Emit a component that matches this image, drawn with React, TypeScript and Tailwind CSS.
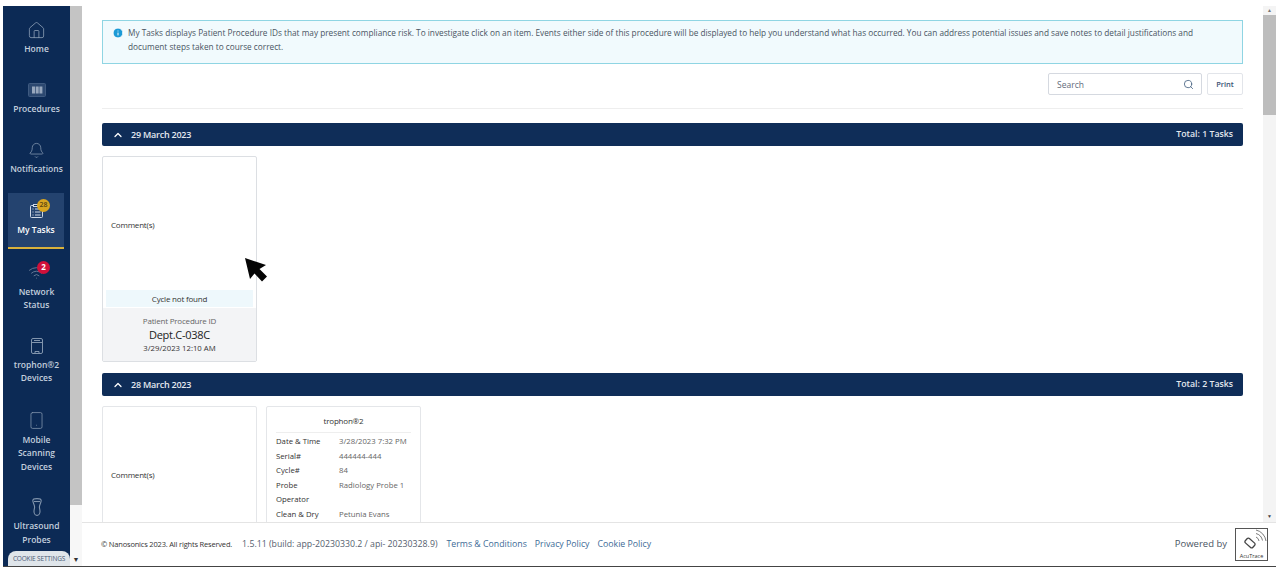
import { Bell, ChevronUp, Home, Info, Search, Smartphone, Wifi } from "lucide-react";
import type { ReactNode } from "react";

function ProceduresIcon() {
  return (
    <svg width="18" height="14" viewBox="0 0 18 14">
      <rect x="0.5" y="0.5" width="17" height="13" rx="1" fill="#2c4870" stroke="#3f5a80" />
      <rect x="4" y="3.5" width="3" height="7" fill="#97a7bd" />
      <rect x="7.7" y="3.5" width="3" height="7" fill="#97a7bd" />
      <rect x="11.4" y="3.5" width="3" height="7" fill="#97a7bd" />
    </svg>
  );
}

function TasksIcon() {
  return (
    <svg width="13" height="14" viewBox="0 0 13 14" fill="none" stroke="#cfd9e6" strokeWidth="1">
      <rect x="0.5" y="1.5" width="12" height="12" rx="1" />
      <rect x="3.5" y="0.5" width="6" height="2" fill="#0c2a55" />
      <path d="M2.500 5h1M5 5h5.500M2.500 8h1M5 8h5.500M2.500 11h1M5 11h5.500" />
    </svg>
  );
}

function TrophonIcon() {
  return (
    <svg width="12" height="16" viewBox="0 0 12 16" fill="none" stroke="#8295ad" strokeWidth="1">
      <rect x="0.5" y="0.5" width="11" height="15" rx="1.500" />
      <path d="M0.500 4.500h11M3 2.500h6M4 15.500v-2h4v2" />
    </svg>
  );
}

function ProbeIcon() {
  return (
    <svg width="10" height="18" viewBox="0 0 10 18" fill="none" stroke="#8295ad" strokeWidth="1.100">
      <path d="M0.800 2.500C0.800 1.200 2.500 .6 5 .6s4.200 .6 4.200 1.900c0 2.500-1.800 4-1.800 6.500 0 1.500.6 2.600.6 4.500 0 2-1.300 3.900-3 3.900s-3-1.900-3-3.900c0-1.900.6-3 .6-4.500 0-2.500-1.800-4-1.800-6.500z" />
      <path d="M2 3.500h6" />
    </svg>
  );
}

type NavItem = { labels: string[]; icon: ReactNode; space: string; badge?: string };

const navItems: NavItem[] = [
  { labels: ["Home"], icon: <Home size={19} strokeWidth={1} color="#8fa1b8" />, space: "mt-[13px]" },
  { labels: ["Procedures"], icon: <ProceduresIcon />, space: "mt-[23px]" },
  { labels: ["Notifications"], icon: <Bell size={17} strokeWidth={1} color="#8fa1b8" />, space: "mt-[24px]" },
];

const navItemsBelow: NavItem[] = [
  { labels: ["Network", "Status"], icon: <Wifi size={17} strokeWidth={1.2} color="#71849e" />, space: "mt-[13px]", badge: "2" },
  { labels: ["trophon®2", "Devices"], icon: <TrophonIcon />, space: "mt-[23px]" },
  { labels: ["Mobile", "Scanning", "Devices"], icon: <Smartphone size={19} strokeWidth={1} color="#8295ad" />, space: "mt-[25px]" },
  { labels: ["Ultrasound", "Probes"], icon: <ProbeIcon />, space: "mt-[23px]" },
];

function NavEntry({ item }: { item: NavItem }) {
  return (
    <div className={`${item.space} flex flex-col items-center`}>
      <div className="relative flex h-[22px] w-full items-center justify-center">
        {item.icon}
        {item.badge && (
          <span className="absolute left-[34px] top-[-1px] flex h-[13px] w-[13px] items-center justify-center rounded-full bg-[#d0103a] text-[8px] font-bold text-white">
            {item.badge}
          </span>
        )}
      </div>
      <div className="mt-[1px] text-center text-[8.500px] font-semibold leading-[13.500px] text-[#c3cfdd]">
        {item.labels.map((label) => (
          <div key={label}>{label}</div>
        ))}
      </div>
    </div>
  );
}

function Sidebar() {
  return (
    <aside className="relative h-full w-[67px] shrink-0 overflow-hidden bg-[#0c2a55]">
      {navItems.map((item) => (
        <NavEntry key={item.labels[0]} item={item} />
      ))}
      <div className="ml-[5px] mr-[6px] mt-[17px] flex h-[56px] flex-col items-center border-b-2 border-[#d9b13b] bg-[#24436f] pt-[7px]">
        <div className="relative flex h-[22px] w-full items-center justify-center">
          <TasksIcon />
          <span className="absolute left-[29px] top-[-1px] flex h-[13px] w-[13px] items-center justify-center rounded-full bg-[#d9a520] text-[7px] font-semibold text-[#5b4510]">
            28
          </span>
        </div>
        <div className="mt-[1px] text-[8.500px] font-semibold leading-[13.500px] text-white">My Tasks</div>
      </div>
      {navItemsBelow.map((item) => (
        <NavEntry key={item.labels[0]} item={item} />
      ))}
      <div className="absolute bottom-0 left-[5px] flex h-[15px] w-[62px] items-center justify-center rounded-tl-[8px] rounded-tr-[8px] bg-[#dfe5ea] text-[6.500px] tracking-tight text-[#4a5a75]">
        COOKIE SETTINGS
      </div>
    </aside>
  );
}

function Comments() {
  return <div className="flex h-[134px] items-center pl-[8px] pt-[2px] text-[8px] tracking-tight text-[#333]">Comment(s)</div>;
}

function DateBar({ date, total }: { date: string; total: string }) {
  return (
    <div className="flex h-[23px] items-center justify-between rounded-[2px] bg-[#0f2d58] pl-[10px] pr-[10px] text-[8.750px] font-semibold text-[#e3e8ef]">
      <div className="flex items-center gap-[7px]">
        <ChevronUp size={12} strokeWidth={2.5} color="white" />
        <span className="text-[9px] tracking-tight">{date}</span>
      </div>
      <span>{total}</span>
    </div>
  );
}

const cycleRows = [
  ["Date & Time", "3/28/2023 7:32 PM"],
  ["Serial#", "444444-444"],
  ["Cycle#", "84"],
  ["Probe", "Radiology Probe 1"],
  ["Operator", ""],
  ["Clean & Dry", "Petunia Evans"],
];

function TaskContent() {
  return (
    <div className="flex-1 overflow-hidden pl-[20px] pr-[20px] pt-[14px]">
      <div className="flex h-[44px] gap-[4px] border border-[#8fd5e3] bg-[#f1fafd] pl-[9px] pr-[30px] pt-[5px] text-[8.250px] leading-[14px] text-[#4a5563]">
        <Info size={12} fill="#1b9ad6" color="white" strokeWidth={2} className="mt-[1px] shrink-0" />
        <p>
          My Tasks displays Patient Procedure IDs that may present compliance risk. To investigate click on an item. Events either side of this procedure will be displayed to help you understand what has occurred. You can address potential issues and save notes to detail justifications and document steps taken to course correct.
        </p>
      </div>
      <div className="mt-[9px] flex justify-end gap-[5px]">
        <div className="flex h-[22px] w-[154px] items-center justify-between rounded-[2px] border border-[#d5d9e0] pl-[8px] pr-[7px] text-[8.500px] text-[#5f6b7a]">
          <span className="pt-[2px]">Search</span>
          <Search size={11} strokeWidth={1.8} color="#44607f" />
        </div>
        <div className="flex h-[22px] w-[36px] items-center justify-center rounded-[2px] border border-[#e2e5ea] pt-[1px] text-[7.500px] font-semibold text-[#3c5475]">
          Print
        </div>
      </div>
      <div className="mb-[14px] mt-[13px] h-px bg-[#eeeeee]" />
      <DateBar date="29 March 2023" total="Total: 1 Tasks" />
      <div className="mt-[10px] h-[206px] w-[155px] overflow-hidden rounded-[2px] border border-[#dcdfe3] bg-white">
        <Comments />
        <div className="mx-[3px] -mt-px flex h-[17px] items-center justify-center bg-[#eef8fc] text-[8px] tracking-tight text-[#333]">
          Cycle not found
        </div>
        <div className="mt-px flex h-[54px] flex-col items-center bg-[#f3f4f6] pt-[7px] text-[#333]">
          <div className="text-[8px] leading-[11px] tracking-tight text-[#666]">Patient Procedure ID</div>
          <div className="text-[11px] font-medium leading-[17px] tracking-tight text-[#222]">Dept.C-038C</div>
          <div className="text-[7.750px] leading-[11px]">3/29/2023 12:10 AM</div>
        </div>
      </div>
      <div className="mt-[11px]">
        <DateBar date="28 March 2023" total="Total: 2 Tasks" />
      </div>
      <div className="mt-[10px] flex gap-[9px]">
        <div className="h-[206px] w-[155px] rounded-[2px] border border-[#e4e6e9]">
          <Comments />
        </div>
        <div className="h-[206px] w-[155px] rounded-[2px] border border-[#e4e6e9] px-[9px]">
          <div className="flex h-[26px] items-center justify-center border-b border-[#eeeeee] pt-[2px] text-[8px] tracking-tight text-[#333]">
            trophon®2
          </div>
          <div className="pt-[1px] text-[7.750px] leading-[14.500px]">
            {cycleRows.map(([label, value]) => (
              <div key={label} className="flex">
                <span className="w-[63px] shrink-0 text-[#333]">{label}</span>
                <span className="whitespace-nowrap text-[#666]">{value}</span>
              </div>
            ))}
          </div>
        </div>
      </div>
    </div>
  );
}

function PageScrollbar() {
  return (
    <div className="flex h-full w-[13px] shrink-0 flex-col bg-[#f4f4f4]">
      <div className="flex h-[9px] items-center justify-center text-[5px] leading-none text-[#777]">▲</div>
      <div className="h-[100px] bg-[#bdbdbd]" />
      <div className="flex-1" />
      <div className="flex h-[12px] items-center justify-center text-[5px] leading-none text-[#444]">▼</div>
    </div>
  );
}

function Footer() {
  return (
    <footer className="flex h-[44px] shrink-0 items-center justify-between border-t border-[#e4e4e4] bg-white pl-[19px] pr-[8px]">
      <div className="flex items-center text-[8.750px]">
        <span className="text-[7.500px] tracking-tight text-[#333]">© Nanosonics 2023. All rights Reserved.</span>
        <span className="ml-[10px] text-[#55606e]">1.5.11 (build: app-20230330.2 / api- 20230328.9)</span>
        <a className="ml-[9px] text-[#3c6a96]">Terms &amp; Conditions</a>
        <a className="ml-[8px] text-[#3c6a96]">Privacy Policy</a>
        <a className="ml-[8px] text-[#3c6a96]">Cookie Policy</a>
      </div>
      <div className="flex items-center gap-[8px]">
        <span className="text-[9.500px] text-[#4a5563]">Powered by</span>
        <div className="relative h-[33px] w-[33px] overflow-hidden border border-[#555] bg-white">
          <svg width="31" height="24" viewBox="0 0 31 24" fill="none" stroke="#444" className="absolute left-0 top-0">
            <rect x="-5" y="-3" width="10" height="6" rx="1.500" transform="translate(14 14) rotate(42)" strokeWidth="1.300" />
            <path d="M20 8a5 5 0 0 1 3 4M20 4.500a9 9 0 0 1 6.500 7M20 1a13 13 0 0 1 10 11" strokeWidth="0.700" />
          </svg>
          <div className="absolute bottom-0 left-0 w-full text-center text-[5.500px] leading-[8px] text-[#333]">AcuTrace</div>
        </div>
      </div>
    </footer>
  );
}

export default function App() {
  return (
    <div className="relative h-[572px] w-[1283px] overflow-hidden bg-white pl-[3px] pr-[7px] pt-[6px] font-['Open_Sans',sans-serif]">
      <div className="flex h-[561px] border-b border-[#444]">
        <Sidebar />
        <div className="flex h-full w-[12px] shrink-0 flex-col bg-[#f7f7f7]">
          <div className="h-[499px] bg-[#c4c4c4]" />
          <div className="flex flex-1 items-end justify-center pb-[3px] text-[7px] leading-none text-[#333]">▼</div>
        </div>
        <div className="flex min-w-0 flex-1 flex-col">
          <div className="flex min-h-0 flex-1">
            <TaskContent />
            <PageScrollbar />
          </div>
          <Footer />
        </div>
      </div>
      <svg width="25" height="26" viewBox="0 0 25 26" className="absolute left-[244px] top-[257px]">
        <path d="M1 1 L6 22 L10.500 16.500 L18 24.500 L23 19.500 L15.500 12 L22 8 Z" fill="#050505" />
      </svg>
    </div>
  );
}
